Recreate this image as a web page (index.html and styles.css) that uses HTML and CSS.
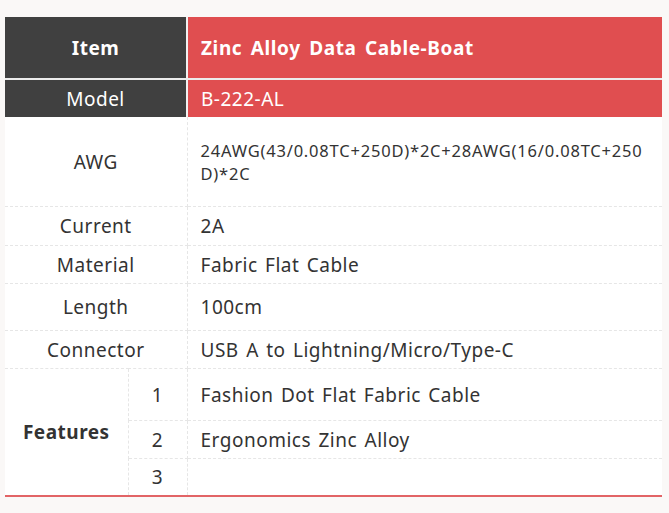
FILE: index.html
```html
<!DOCTYPE html>
<html>
<head>
<meta charset="utf-8">
<link rel="stylesheet" href="styles.css">
</head>
<body>
<table class="spec">
  <colgroup>
    <col class="c-label">
    <col class="c-num">
    <col class="c-value">
  </colgroup>
  <tr class="r-head">
    <th class="h-label" colspan="2">Item</th>
    <th class="h-value">Zinc Alloy Data Cable-Boat</th>
  </tr>
  <tr class="r-model">
    <td class="m-label" colspan="2">Model</td>
    <td class="m-value">B-222-AL</td>
  </tr>
  <tr class="r-awg">
    <td class="label" colspan="2">AWG</td>
    <td class="value small">24AWG(43/0.08TC+250D)*2C+28AWG(16/0.08TC+250D)*2C</td>
  </tr>
  <tr class="r-current">
    <td class="label" colspan="2">Current</td>
    <td class="value">2A</td>
  </tr>
  <tr class="r-material">
    <td class="label" colspan="2">Material</td>
    <td class="value">Fabric Flat Cable</td>
  </tr>
  <tr class="r-length">
    <td class="label" colspan="2">Length</td>
    <td class="value">100cm</td>
  </tr>
  <tr class="r-connector">
    <td class="label" colspan="2">Connector</td>
    <td class="value">USB A to Lightning/Micro/Type-C</td>
  </tr>
  <tr class="r-f1">
    <td class="label feat" rowspan="3">Features</td>
    <td class="num">1</td>
    <td class="value">Fashion Dot Flat Fabric Cable</td>
  </tr>
  <tr class="r-f2">
    <td class="num">2</td>
    <td class="value">Ergonomics Zinc Alloy</td>
  </tr>
  <tr class="r-f3 last">
    <td class="num">3</td>
    <td class="value"></td>
  </tr>
</table>
</body>
</html>
```
FILE: styles.css
```css
html, body {
  margin: 0;
  padding: 0;
  background: #faf8f7;
}
body {
  padding: 17px 0 0 5px;
  font-family: "Noto Sans", "Open Sans", sans-serif;
  color: #333333;
}
.spec {
  width: 657px;
  border-collapse: collapse;
  table-layout: fixed;
  background: #ffffff;
}
.c-label { width: 123px; }
.c-num { width: 59px; }
.spec th, .spec td {
  padding: 0;
  font-size: 19px;
  line-height: 24px;
  letter-spacing: 0.5px;
  word-spacing: 2px;
  vertical-align: middle;
  border: 1px dashed #e6e6e6;
  border-top: none;
}
.spec tr > :first-child { border-left: none; }
.spec tr > :last-child { border-right: none; }
.h-label, .h-value {
  height: 61px;
  font-weight: 700;
  color: #ffffff;
}
.spec .h-value {
  letter-spacing: 0.6px;
  word-spacing: 3px;
}
.h-label, .m-label {
  background: #404040;
  text-align: center;
}
.h-value, .m-value {
  background: #e04e50;
  text-align: left;
  padding-left: 13px !important;
}
.spec .r-head th {
  border: none;
  border-bottom: 2px solid #ececec;
}
.spec .r-head .h-label,
.spec .r-model .m-label {
  border-right: 2px solid #f2f2f2;
}
.spec .r-model td {
  border: none;
  height: 37px;
  color: #ffffff;
}
.spec .r-model .m-label { border-right: 2px solid #f2f2f2; }
.label {
  text-align: center;
}
.feat {
  font-weight: 700;
}
.num {
  text-align: center;
}
.value {
  text-align: left;
  padding-left: 13px !important;
}
.spec .value.small {
  font-size: 16.5px;
  line-height: 23px;
  letter-spacing: 0.8px;
  padding-right: 13px !important;
  word-break: break-all;
}
.spec .r-awg .label, .spec .r-awg .value { height: 89px; }
.r-current td { height: 38px; }
.r-material td { height: 37px; }
.r-length td { height: 46px; }
.r-connector td { height: 37px; }
.r-f1 .num, .r-f1 .value { height: 51px; }
.r-f2 td { height: 37px; }
.r-f3 td { height: 36px; }
.spec .feat, .spec .last td {
  border-bottom: 2px solid #e26466;
}
```
